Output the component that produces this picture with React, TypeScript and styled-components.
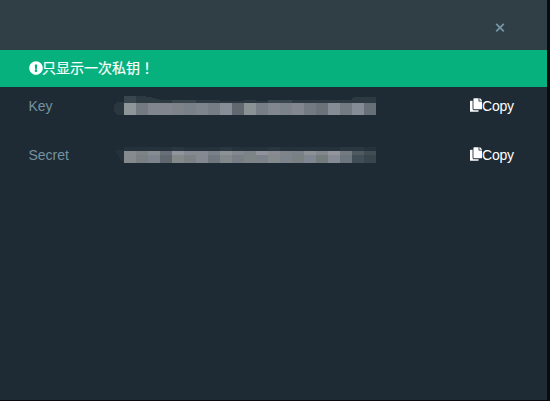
import React from "react";
import styled, { createGlobalStyle } from "styled-components";
import { FaCopy, FaExclamationCircle } from "react-icons/fa";

const GlobalStyle = createGlobalStyle`
  * { box-sizing: border-box; }
  body { margin: 0; background: #080b0f; overflow: hidden; }
`;

const Dialog = styled.main`
  width: 547px;
  height: 400px;
  background: #1f2b34;
  color: #fff;
  font: 14px/20px "Liberation Sans", "Noto Sans CJK SC", sans-serif;
`;

const Header = styled.header`
  height: 50px;
  padding: 17px 41px 0 0;
  display: flex;
  justify-content: flex-end;
  align-items: flex-start;
  background: #303e46;
`;

const CloseButton = styled.button`
  width: 12px;
  height: 22px;
  padding: 0;
  border: 0;
  display: flex;
  align-items: center;
  justify-content: center;
  background: none;
  color: #7696a5;
`;

const Notice = styled.div`
  height: 37px;
  padding: 0 29px 2px;
  display: flex;
  align-items: center;
  background: #06b17d;
`;

const NoticeText = styled.span`
  margin: -2px 0 0 -1px;
  font-family: "Noto Sans CJK SC", sans-serif;
  -webkit-text-stroke: 0.2px currentColor;
`;

const CenteredMark = styled.span`
  font-family: "Noto Sans CJK TC", sans-serif;
`;

const Rows = styled.div`
  display: flex;
  flex-direction: column;
`;

const Row = styled.div`
  height: 49px;
  padding: 0 32px 0 28px;
  display: grid;
  grid-template-columns: 86px 356px 1fr;
  align-items: start;
`;

const Label = styled.span`
  padding: 9px 0 0 0.5px;
  color: #7492a0;
`;

const Masked = styled.svg`
  display: block;
  width: 264px;
  height: 40px;
`;

const CopyButton = styled.button`
  height: 20px;
  margin-top: 9px;
  padding: 0;
  border: 0;
  display: flex;
  align-items: center;
  background: none;
  color: inherit;
  font: inherit;
  letter-spacing: -0.2px;

  svg { width: 12px; height: 14px; margin-top: -2px; flex: none; }
`;

const NoticeIcon = styled(FaExclamationCircle)`
  width: 14px;
  height: 14px;
  flex: none;
`;

interface Mosaic {
  edges: { d: string; color: string }[];
  /** Bands of 12px wide cells: top offset, height, cell colours. */
  bands: { y: number; h: number; cells: string[] }[];
}

const keyMosaic: Mosaic = {
  edges: [
    { d: "M10 15H3L0 18V24L3 28H10Z", color: "#2b373f" },
    { d: "M22 9H28L36 10L42 12L48 13V16H22Z M46 13H58V16H46Z M82 13H106V16H82Z M130 13H142V16H130Z M178 13H238V11L242 10H262V16H178Z", color: "#2e3a42" },
    { d: "M10 9H22V16H10Z M58 13H70V16H58Z M70 13H82V16H70Z M154 13H178V16H154Z", color: "#3a464e" },
    { d: "M106 14H154V16H106Z", color: "#2c3840" },
  ],
  bands: [
    {
      y: 16,
      h: 12,
      cells: ["#8f9699", "#737a80", "#81858d", "#81858d", "#7e8389", "#7a8087", "#7e848c", "#777d84", "#888e98", "#61686f", "#8b9293",
        "#787e85", "#82878f", "#7c8289", "#82878f", "#747a82", "#6b727a", "#868c96", "#747a82", "#868c96", "#687077"],
    },
  ],
};

const secretMosaic: Mosaic = {
  edges: [
    { d: "M2 14H10V26L6 24L5 19L2 17Z M10 11H262V15H10Z", color: "#26323b" },
    { d: "M58 11H70V15H58Z M106 11H118V15H106Z M154 11H166V15H154Z M226 11H250V15H226Z", color: "#2b3740" },
  ],
  bands: [
    {
      y: 15,
      h: 4,
      cells: ["#858b8f", "#7d8287", "#868c91", "#696f76", "#91949c", "#858a92", "#858a92", "#7a8087", "#8b9195", "#83888f", "#7d8489",
        "#90939b", "#888c92", "#7e848a", "#7b8188", "#8b9195", "#81878d", "#92959c", "#737a80", "#4e5960", "#414c53"],
    },
    {
      y: 19,
      h: 8,
      cells: ["#858b8c", "#7a7f83", "#7e848d", "#61676e", "#838889", "#7c8185", "#848991", "#70777f", "#828889", "#787e86", "#7e8385",
        "#7d828a", "#858a8c", "#7d838a", "#7a8082", "#808691", "#747b7d", "#858a95", "#6c747d", "#414d57", "#39454d"],
    },
  ],
};

function MaskedValue({ mosaic }: { mosaic: Mosaic }) {
  return (
    <Masked viewBox="0 0 264 40" shapeRendering="crispEdges" aria-label="Hidden value">
      {mosaic.edges.map((edge) => (
        <path key={edge.d} d={edge.d} fill={edge.color} />
      ))}
      {mosaic.bands.map((band) =>
        band.cells.map((color, i) => (
          <rect key={`${band.y}-${i}`} x={10 + i * 12} y={band.y} width={12} height={band.h} fill={color} />
        )),
      )}
    </Masked>
  );
}

export default function App() {
  return (
    <>
      <GlobalStyle />
      <Dialog>
        <Header>
          <CloseButton aria-label="Close">
            <svg width="10" height="10" viewBox="0 0 10 10" stroke="currentColor" strokeWidth="1.8">
              <path d="M1.2 .8 8.8 8.4M8.8 .8 1.2 8.4" />
            </svg>
          </CloseButton>
        </Header>
        <Notice>
          <NoticeIcon />
          <NoticeText>只显示一次私钥<CenteredMark>！</CenteredMark></NoticeText>
        </Notice>
        <Rows>
          <Row>
            <Label>Key</Label>
            <MaskedValue mosaic={keyMosaic} />
            <CopyButton><FaCopy />Copy</CopyButton>
          </Row>
          <Row>
            <Label>Secret</Label>
            <MaskedValue mosaic={secretMosaic} />
            <CopyButton><FaCopy />Copy</CopyButton>
          </Row>
        </Rows>
      </Dialog>
    </>
  );
}
